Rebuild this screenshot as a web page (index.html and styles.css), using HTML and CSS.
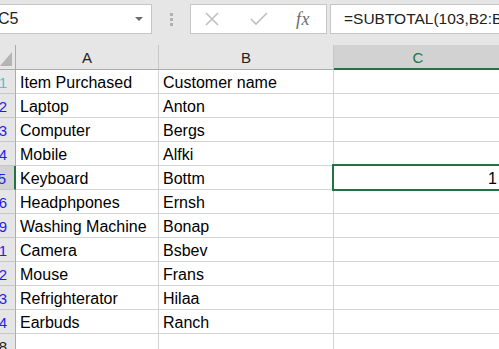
FILE: index.html
```html
<!DOCTYPE html>
<html>
<head>
<meta charset="utf-8">
<link rel="stylesheet" href="styles.css">
</head>
<body>
<div class="topbar">
  <div class="namebox"><span class="nb-text">C5</span><span class="nb-arrow"></span></div>
  <div class="dots"><span></span><span></span><span></span></div>
  <div class="fnbox">
    <svg class="ic-x" width="16" height="16" viewBox="0 0 16 16"><path d="M2 2 L14 14 M14 2 L2 14" stroke="#bfbfbf" stroke-width="1.6" fill="none"/></svg>
    <svg class="ic-check" width="18" height="16" viewBox="0 0 18 16"><path d="M1 8 L6 13 L17 2" stroke="#bfbfbf" stroke-width="1.6" fill="none"/></svg>
    <span class="ic-fx">fx</span>
  </div>
  <div class="formula">=SUBTOTAL(103,B2:B15)</div>
</div>
<div class="sheet">
  <div class="corner"><span class="tri"></span></div>
  <div class="colhdr">A</div>
  <div class="colhdr">B</div>
  <div class="colhdr sel">C</div>

  <div class="rowhdr first">1</div><div class="cell">Item Purchased</div><div class="cell">Customer name</div><div class="cell"></div>
  <div class="rowhdr">2</div><div class="cell">Laptop</div><div class="cell">Anton</div><div class="cell"></div>
  <div class="rowhdr">3</div><div class="cell">Computer</div><div class="cell">Bergs</div><div class="cell"></div>
  <div class="rowhdr">4</div><div class="cell">Mobile</div><div class="cell">Alfki</div><div class="cell"></div>
  <div class="rowhdr sel">5</div><div class="cell">Keyboard</div><div class="cell">Bottm</div><div class="cell num active">1</div>
  <div class="rowhdr">6</div><div class="cell">Headphpones</div><div class="cell">Ernsh</div><div class="cell"></div>
  <div class="rowhdr">9</div><div class="cell">Washing Machine</div><div class="cell">Bonap</div><div class="cell"></div>
  <div class="rowhdr">11</div><div class="cell">Camera</div><div class="cell">Bsbev</div><div class="cell"></div>
  <div class="rowhdr">12</div><div class="cell">Mouse</div><div class="cell">Frans</div><div class="cell"></div>
  <div class="rowhdr">13</div><div class="cell">Refrighterator</div><div class="cell">Hilaa</div><div class="cell"></div>
  <div class="rowhdr">14</div><div class="cell">Earbuds</div><div class="cell">Ranch</div><div class="cell"></div>
  <div class="rowhdr plain">18</div><div class="cell"></div><div class="cell"></div><div class="cell"></div>
</div>
</body>
</html>
```

FILE: styles.css
```css
* { box-sizing: border-box; }
html, body { margin: 0; padding: 0; }
body {
  width: 499px;
  height: 349px;
  overflow: hidden;
  background: #ffffff;
  font-family: "Liberation Sans", Arial, sans-serif;
  color: #000;
}
.topbar {
  height: 45px;
  background: #e6e6e6;
  display: flex;
  align-items: flex-start;
  padding-top: 4px;
  white-space: nowrap;
}
.namebox {
  margin-left: -20px;
  width: 172px;
  height: 30px;
  background: #fff;
  border: 1px solid #c6c6c6;
  display: flex;
  align-items: center;
  justify-content: space-between;
  padding: 0 8px 0 17px;
  font-size: 16px;
  color: #222;
}
.nb-arrow {
  width: 0; height: 0;
  border-left: 4px solid transparent;
  border-right: 4px solid transparent;
  border-top: 4px solid #6b6b6b;
}
.dots {
  width: 38px;
  height: 30px;
  display: flex;
  flex-direction: column;
  align-items: center;
  justify-content: center;
  gap: 2px;
}
.dots span { width: 3px; height: 3px; background: #b0b0b0; }
.fnbox {
  width: 137px;
  height: 30px;
  background: #fff;
  border: 1px solid #c6c6c6;
  display: flex;
  align-items: center;
  padding-left: 13px;
}
.ic-check { margin-left: 30px; }
.ic-fx {
  margin-left: 28px;
  font-family: "Liberation Serif", "Times New Roman", serif;
  font-style: italic;
  font-size: 18px;
  color: #6b6b6b;
  letter-spacing: 0.5px;
}
.formula {
  margin-left: 3px;
  flex: 1;
  height: 30px;
  background: #fff;
  border: 1px solid #c6c6c6;
  border-right: none;
  font-size: 15.5px;
  line-height: 28px;
  padding-left: 13px;
  color: #222;
  overflow: hidden;
}
.sheet {
  display: grid;
  grid-template-columns: 16px 143px 175px 168px;
  grid-template-rows: 25px repeat(12, 24px);
}
.corner {
  background: #e6e6e6;
  border-right: 1px solid #ababab;
  border-bottom: 1px solid #ababab;
  position: relative;
}
.tri {
  position: absolute;
  right: 3px;
  bottom: 3px;
  width: 0; height: 0;
  border-left: 12px solid transparent;
  border-bottom: 14px solid #b4b4b4;
}
.colhdr {
  background: #e6e6e6;
  border-right: 1px solid #c6c6c6;
  border-bottom: 1px solid #ababab;
  text-align: center;
  font-size: 15px;
  line-height: 24px;
  padding-top: 1px;
  color: #222;
}
.colhdr.sel {
  background: #d2d2d2;
  color: #217346;
  border-bottom: 2px solid #217346;
  border-right: none;
}
.rowhdr {
  background: #e6e6e6;
  border-right: 1px solid #ababab;
  border-bottom: 1px solid #c6c6c6;
  font-size: 15px;
  line-height: 22px;
  padding-top: 2px;
  color: #1f1fe6;
  overflow: hidden;
  direction: rtl;
  padding-right: 8px;
  white-space: nowrap;
}
.rowhdr.first { color: #45c6d8; }
.rowhdr.plain { color: #222; }
.rowhdr.sel {
  background: #d2d2d2;
  border-right: 2px solid #217346;
}
.cell {
  border-right: 1px solid #d4d4d4;
  border-bottom: 1px solid #d4d4d4;
  font-size: 16px;
  line-height: 22px;
  padding: 2px 3px 0 4px;
  white-space: nowrap;
  overflow: hidden;
}
.cell.num { text-align: right; padding-right: 4px; }
.cell.active { position: relative; overflow: visible; }
.cell.active::after {
  content: "";
  position: absolute;
  left: -2px;
  top: -2px;
  right: -6px;
  bottom: -2px;
  border: 2px solid #217346;
}
```
